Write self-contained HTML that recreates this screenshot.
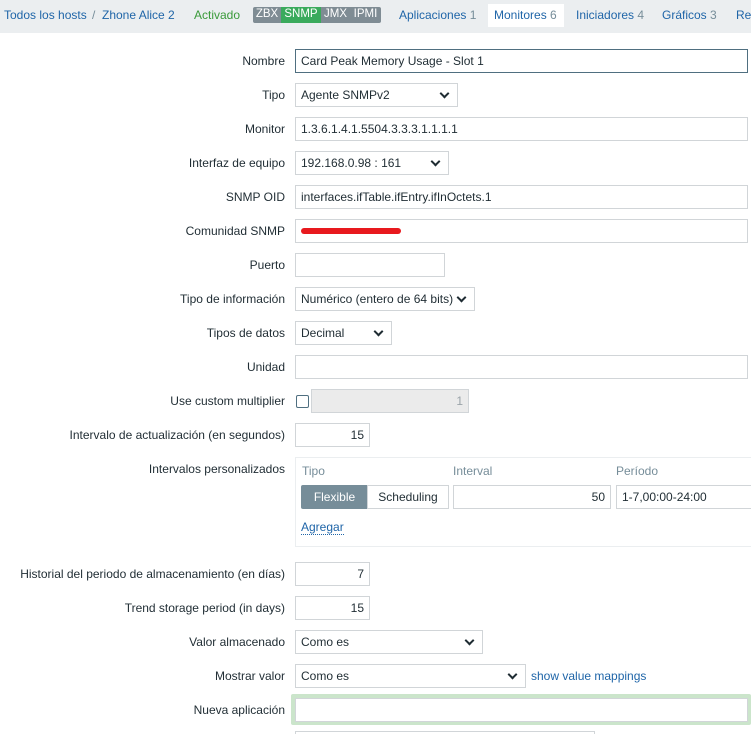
<!DOCTYPE html>
<html style="width:751px;height:734px;overflow:hidden"><head><meta charset="utf-8"><style>
*{box-sizing:border-box;margin:0;padding:0}
body{width:751px;height:734px;overflow:hidden;background:#fff;font-family:"Liberation Sans",Arial,sans-serif;font-size:12px;color:#1f2c33;position:relative}
.a{position:absolute;white-space:nowrap}
.hdr{position:absolute;left:0;top:0;width:751px;height:33px;background:#ebeef0}
.lnk{color:#1f65a8}
.cnt{color:#768d99}
.lbl{position:absolute;right:466px;text-align:right;white-space:nowrap;line-height:14px}
.in{position:absolute;height:24px;border:1px solid #d1d5d8;background:#fff;padding:0 5px;line-height:22px;white-space:nowrap;overflow:hidden}
.sel::after{content:"";position:absolute;right:9px;top:6px;width:5px;height:5px;border-right:2px solid #1f2c33;border-bottom:2px solid #1f2c33;transform:rotate(45deg)}
.r{text-align:right}
.b{position:absolute;top:7px;height:16px;color:#fff;line-height:16px;font-size:12px;text-align:center;background:#7f8c94;letter-spacing:-0.3px;font-weight:bold;transform:scaleX(0.9)}
</style></head><body>
<div class="hdr"></div>
<div class="a lnk" style="left:4px;top:8px">Todos los hosts</div>
<div class="a" style="left:92px;top:8px;color:#768d99">/</div>
<div class="a lnk" style="left:102px;top:8px">Zhone Alice 2</div>
<div class="a" style="left:194px;top:8px;color:#3a9a3a">Activado</div>
<div class="a" style="left:253px;top:7px;width:128px;height:16px;background:#7f8c94;border-radius:2px"></div>
<div class="a" style="left:281px;top:7px;width:40px;height:16px;background:#3aaa5c"></div>
<div class="a" style="left:253px;top:8px;width:28px;color:#fff;text-align:center;font-size:11.5px">ZBX</div>
<div class="a" style="left:281px;top:8px;width:40px;color:#fff;text-align:center;font-size:11.5px">SNMP</div>
<div class="a" style="left:321px;top:8px;width:29px;color:#fff;text-align:center;font-size:11.5px">JMX</div>
<div class="a" style="left:350px;top:8px;width:31px;color:#fff;text-align:center;font-size:11.5px">IPMI</div>
<div class="a lnk" style="left:399px;top:8px">Aplicaciones <span class="cnt">1</span></div>
<div class="a" style="left:488px;top:4px;width:76px;height:23px;background:#fff"></div>
<div class="a lnk" style="left:494px;top:8px">Monitores <span class="cnt">6</span></div>
<div class="a lnk" style="left:576px;top:8px">Iniciadores <span class="cnt">4</span></div>
<div class="a lnk" style="left:662px;top:8px">Gráficos <span class="cnt">3</span></div>
<div class="a lnk" style="left:736px;top:8px">Re</div>

<div class="lbl" style="top:54px">Nombre</div>
<div class="in" style="left:295px;top:49px;width:453px;border-color:#4f6f80">Card Peak Memory Usage - Slot 1</div>
<div class="lbl" style="top:88px">Tipo</div>
<div class="in sel" style="left:295px;top:83px;width:163px">Agente SNMPv2</div>
<div class="lbl" style="top:122px">Monitor</div>
<div class="in" style="left:295px;top:117px;width:453px">1.3.6.1.4.1.5504.3.3.3.1.1.1.1</div>
<div class="lbl" style="top:156px">Interfaz de equipo</div>
<div class="in sel" style="left:295px;top:151px;width:154px">192.168.0.98 : 161</div>
<div class="lbl" style="top:190px">SNMP OID</div>
<div class="in" style="left:295px;top:185px;width:453px">interfaces.ifTable.ifEntry.ifInOctets.1</div>
<div class="lbl" style="top:224px">Comunidad SNMP</div>
<div class="in" style="left:295px;top:219px;width:453px"><span style="display:inline-block;margin-top:8px;width:100px;height:6px;background:#e8191e;border-radius:3px;vertical-align:top"></span></div>
<div class="lbl" style="top:258px">Puerto</div>
<div class="in" style="left:295px;top:253px;width:150px"></div>
<div class="lbl" style="top:292px">Tipo de información</div>
<div class="in sel" style="left:295px;top:287px;width:180px">Numérico (entero de 64 bits)</div>
<div class="lbl" style="top:326px">Tipos de datos</div>
<div class="in sel" style="left:295px;top:321px;width:97px">Decimal</div>
<div class="lbl" style="top:360px">Unidad</div>
<div class="in" style="left:295px;top:355px;width:453px"></div>
<div class="lbl" style="top:394px">Use custom multiplier</div>
<div class="a" style="left:296px;top:395px;width:13px;height:13px;border:1px solid #4f6f80;border-radius:2px"></div>
<div class="in r" style="left:311px;top:389px;width:158px;background:#ebebeb;color:#9aa3a8">1</div>
<div class="lbl" style="top:428px">Intervalo de actualización (en segundos)</div>
<div class="in r" style="left:295px;top:423px;width:75px">15</div>
<div class="lbl" style="top:462px">Intervalos personalizados</div>
<div class="a" style="left:295px;top:457px;width:470px;height:90px;border:1px solid #ebeef0"></div>
<div class="a" style="left:302px;top:464px;color:#768d99">Tipo</div>
<div class="a" style="left:453px;top:464px;color:#768d99">Interval</div>
<div class="a" style="left:616px;top:464px;color:#768d99">Período</div>
<div class="a" style="left:301px;top:485px;width:67px;height:24px;background:#768d99;color:#fff;line-height:24px;text-align:center;border-radius:2px 0 0 2px">Flexible</div>
<div class="a" style="left:367px;top:485px;width:82px;height:24px;border:1px solid #d1d5d8;line-height:22px;text-align:center">Scheduling</div>
<div class="in r" style="left:453px;top:485px;width:158px">50</div>
<div class="in" style="left:616px;top:485px;width:150px">1-7,00:00-24:00</div>
<div class="a lnk" style="left:301px;top:520px;border-bottom:1px dotted #1f65a8;line-height:14px">Agregar</div>
<div class="lbl" style="top:567px">Historial del periodo de almacenamiento (en días)</div>
<div class="in r" style="left:295px;top:562px;width:75px">7</div>
<div class="lbl" style="top:601px">Trend storage period (in days)</div>
<div class="in r" style="left:295px;top:596px;width:75px">15</div>
<div class="lbl" style="top:635px">Valor almacenado</div>
<div class="in sel" style="left:295px;top:630px;width:188px">Como es</div>
<div class="lbl" style="top:669px">Mostrar valor</div>
<div class="in sel" style="left:295px;top:664px;width:231px">Como es</div>
<div class="a lnk" style="left:531px;top:669px">show value mappings</div>
<div class="lbl" style="top:703px">Nueva aplicación</div>
<div class="a" style="left:291px;top:694px;width:460px;height:31px;background:#cbe5cb;border-radius:2px"></div>
<div class="in" style="left:295px;top:698px;width:453px"></div>
<div class="in" style="left:295px;top:731px;width:300px;height:3px;border-bottom:none"></div>
</body></html>
